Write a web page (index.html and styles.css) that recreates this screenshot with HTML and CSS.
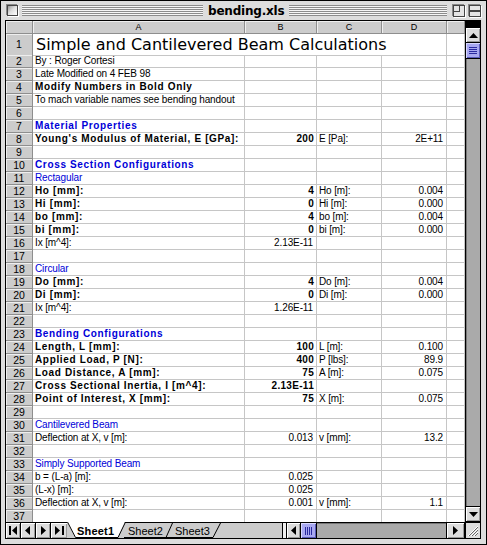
FILE: index.html
```html
<!DOCTYPE html>
<html>
<head>
<meta charset="utf-8">
<link rel="stylesheet" href="styles.css">
</head>
<body>
<div class="win">
  <div class="titlebar">
    <div class="closebox"></div>
    <div class="stripes left"></div>
    <div class="wtitle">bending.xls</div>
    <div class="stripes"></div>
    <div class="zoombox"><div class="zin"></div></div>
    <div class="shadebox"><div class="sline"></div></div>
  </div>
  <div class="body">
    <div class="main">
      <div class="sheet">
        <div class="row hdr"><div class="corner"></div><div class="ch">A</div><div class="ch">B</div><div class="ch">C</div><div class="ch">D</div><div class="ch"></div></div>
        <div class="row r1"><div class="rh">1</div><div class="c big span4">Simple and Cantilevered Beam Calculations</div><div class="c"></div></div>
        <div class="row"><div class="rh">2</div><div class="c">By : Roger Cortesi</div><div class="c"></div><div class="c"></div><div class="c"></div><div class="c"></div></div>
        <div class="row"><div class="rh">3</div><div class="c">Late Modified on 4 FEB 98</div><div class="c"></div><div class="c"></div><div class="c"></div><div class="c"></div></div>
        <div class="row"><div class="rh">4</div><div class="c b">Modify Numbers in Bold Only</div><div class="c"></div><div class="c"></div><div class="c"></div><div class="c"></div></div>
        <div class="row"><div class="rh">5</div><div class="c">To mach variable names see bending handout</div><div class="c"></div><div class="c"></div><div class="c"></div><div class="c"></div></div>
        <div class="row"><div class="rh">6</div><div class="c"></div><div class="c"></div><div class="c"></div><div class="c"></div><div class="c"></div></div>
        <div class="row"><div class="rh">7</div><div class="c b blue">Material Properties</div><div class="c"></div><div class="c"></div><div class="c"></div><div class="c"></div></div>
        <div class="row"><div class="rh">8</div><div class="c b">Young's Modulus of Material, E [GPa]:</div><div class="c b n">200</div><div class="c">E [Pa]:</div><div class="c n">2E+11</div><div class="c"></div></div>
        <div class="row"><div class="rh">9</div><div class="c"></div><div class="c"></div><div class="c"></div><div class="c"></div><div class="c"></div></div>
        <div class="row"><div class="rh">10</div><div class="c b blue">Cross Section Configurations</div><div class="c"></div><div class="c"></div><div class="c"></div><div class="c"></div></div>
        <div class="row"><div class="rh">11</div><div class="c blue">Rectagular</div><div class="c"></div><div class="c"></div><div class="c"></div><div class="c"></div></div>
        <div class="row"><div class="rh">12</div><div class="c b">Ho [mm]:</div><div class="c b n">4</div><div class="c">Ho [m]:</div><div class="c n">0.004</div><div class="c"></div></div>
        <div class="row"><div class="rh">13</div><div class="c b">Hi [mm]:</div><div class="c b n">0</div><div class="c">Hi [m]:</div><div class="c n">0.000</div><div class="c"></div></div>
        <div class="row"><div class="rh">14</div><div class="c b">bo [mm]:</div><div class="c b n">4</div><div class="c">bo [m]:</div><div class="c n">0.004</div><div class="c"></div></div>
        <div class="row"><div class="rh">15</div><div class="c b">bi [mm]:</div><div class="c b n">0</div><div class="c">bi [m]:</div><div class="c n">0.000</div><div class="c"></div></div>
        <div class="row"><div class="rh">16</div><div class="c">Ix [m^4]:</div><div class="c n">2.13E-11</div><div class="c"></div><div class="c"></div><div class="c"></div></div>
        <div class="row"><div class="rh">17</div><div class="c"></div><div class="c"></div><div class="c"></div><div class="c"></div><div class="c"></div></div>
        <div class="row"><div class="rh">18</div><div class="c blue">Circular</div><div class="c"></div><div class="c"></div><div class="c"></div><div class="c"></div></div>
        <div class="row"><div class="rh">19</div><div class="c b">Do [mm]:</div><div class="c b n">4</div><div class="c">Do [m]:</div><div class="c n">0.004</div><div class="c"></div></div>
        <div class="row"><div class="rh">20</div><div class="c b">Di [mm]:</div><div class="c b n">0</div><div class="c">Di [m]:</div><div class="c n">0.000</div><div class="c"></div></div>
        <div class="row"><div class="rh">21</div><div class="c">Ix [m^4]:</div><div class="c n">1.26E-11</div><div class="c"></div><div class="c"></div><div class="c"></div></div>
        <div class="row"><div class="rh">22</div><div class="c"></div><div class="c"></div><div class="c"></div><div class="c"></div><div class="c"></div></div>
        <div class="row"><div class="rh">23</div><div class="c b blue">Bending Configurations</div><div class="c"></div><div class="c"></div><div class="c"></div><div class="c"></div></div>
        <div class="row"><div class="rh">24</div><div class="c b">Length, L [mm]:</div><div class="c b n">100</div><div class="c">L [m]:</div><div class="c n">0.100</div><div class="c"></div></div>
        <div class="row"><div class="rh">25</div><div class="c b">Applied Load, P [N]:</div><div class="c b n">400</div><div class="c">P [lbs]:</div><div class="c n">89.9</div><div class="c"></div></div>
        <div class="row"><div class="rh">26</div><div class="c b">Load Distance, A [mm]:</div><div class="c b n">75</div><div class="c">A [m]:</div><div class="c n">0.075</div><div class="c"></div></div>
        <div class="row"><div class="rh">27</div><div class="c b">Cross Sectional Inertia, I [m^4]:</div><div class="c b n">2.13E-11</div><div class="c"></div><div class="c"></div><div class="c"></div></div>
        <div class="row"><div class="rh">28</div><div class="c b">Point of Interest, X [mm]:</div><div class="c b n">75</div><div class="c">X [m]:</div><div class="c n">0.075</div><div class="c"></div></div>
        <div class="row"><div class="rh">29</div><div class="c"></div><div class="c"></div><div class="c"></div><div class="c"></div><div class="c"></div></div>
        <div class="row"><div class="rh">30</div><div class="c blue">Cantilevered Beam</div><div class="c"></div><div class="c"></div><div class="c"></div><div class="c"></div></div>
        <div class="row"><div class="rh">31</div><div class="c">Deflection at X, v [m]:</div><div class="c n">0.013</div><div class="c">v [mm]:</div><div class="c n">13.2</div><div class="c"></div></div>
        <div class="row"><div class="rh">32</div><div class="c"></div><div class="c"></div><div class="c"></div><div class="c"></div><div class="c"></div></div>
        <div class="row"><div class="rh">33</div><div class="c blue">Simply Supported Beam</div><div class="c"></div><div class="c"></div><div class="c"></div><div class="c"></div></div>
        <div class="row"><div class="rh">34</div><div class="c">b = (L-a) [m]:</div><div class="c n">0.025</div><div class="c"></div><div class="c"></div><div class="c"></div></div>
        <div class="row"><div class="rh">35</div><div class="c">(L-x) [m]:</div><div class="c n">0.025</div><div class="c"></div><div class="c"></div><div class="c"></div></div>
        <div class="row"><div class="rh">36</div><div class="c">Deflection at X, v [m]:</div><div class="c n">0.001</div><div class="c">v [mm]:</div><div class="c n">1.1</div><div class="c"></div></div>
        <div class="row"><div class="rh">37</div><div class="c"></div><div class="c"></div><div class="c"></div><div class="c"></div><div class="c"></div></div>
      </div>
      <div class="vscroll">
        <div class="vsplit"></div>
        <div class="arrowbtn"><svg width="9" height="5" viewBox="0 0 9 5"><polygon points="4.5,0 9,5 0,5" fill="#000"/></svg></div>
        <div class="vthumb"><div class="grip-h"></div></div>
        <div class="vtrack"></div>
        <div class="arrowbtn"><svg width="9" height="5" viewBox="0 0 9 5"><polygon points="0,0 9,0 4.5,5" fill="#000"/></svg></div>
      </div>
    </div>
    <div class="bottom">
      <div class="navs">
        <div class="nav"><svg width="9" height="9" viewBox="0 0 9 9"><rect x="0" y="0" width="2" height="9" fill="#000"/><polygon points="8,0 8,9 3,4.5" fill="#000"/></svg></div>
        <div class="nav"><svg width="6" height="9" viewBox="0 0 6 9"><polygon points="5,0 5,9 0,4.5" fill="#000"/></svg></div>
        <div class="nav"><svg width="6" height="9" viewBox="0 0 6 9"><polygon points="1,0 1,9 6,4.5" fill="#000"/></svg></div>
        <div class="nav"><svg width="9" height="9" viewBox="0 0 9 9"><polygon points="0,0 0,9 5,4.5" fill="#000"/><rect x="7" y="0" width="2" height="9" fill="#000"/></svg></div>
      </div>
      <svg class="tabs" width="156" height="15" viewBox="0 0 156 15">
        <polygon points="0,-1 8,14.5 51,14.5 58,-1" fill="#fff"/>
        <polyline points="0.5,-1 8.5,14.5 51,14.5 58.5,-1" fill="none" stroke="#000"/>
        <polyline points="57,14.5 99,14.5 105.5,0" fill="none" stroke="#000"/>
        <polyline points="99,14.5 146,14.5 153.5,0" fill="none" stroke="#000"/>
        <text x="10" y="11.5" class="tsel">Sheet1</text>
        <text x="61" y="11.5" class="tlab">Sheet2</text>
        <text x="108" y="11.5" class="tlab">Sheet3</text>
      </svg>
      <div class="tabfill"></div>
      <div class="hsplit"></div>
      <div class="hbtn"><svg width="5" height="9" viewBox="0 0 5 9"><polygon points="5,0 5,9 0,4.5" fill="#000"/></svg></div>
      <div class="hthumb"><div class="grip-v"></div></div>
      <div class="htrack"></div>
      <div class="hbtn rbtn"><svg width="5" height="9" viewBox="0 0 5 9"><polygon points="0,0 0,9 5,4.5" fill="#000"/></svg></div>
      <div class="sizebox"><svg width="12" height="12" viewBox="0 0 12 12"><g stroke="#fff" stroke-width="1"><line x1="1" y1="11" x2="11" y2="1"/><line x1="4" y1="11" x2="11" y2="4"/><line x1="7" y1="11" x2="11" y2="7"/></g><g stroke="#666" stroke-width="1"><line x1="2" y1="11" x2="11" y2="2"/><line x1="5" y1="11" x2="11" y2="5"/><line x1="8" y1="11" x2="11" y2="8"/></g></svg></div>
    </div>
  </div>
</div>
</body>
</html>
```
FILE: styles.css
```css
* { box-sizing: border-box; }
html, body { margin: 0; padding: 0; background: #fff; }
body { font-family: "Liberation Sans", Arial, sans-serif; }

.win {
  width: 487px;
  height: 545px;
  border: 1px solid #000;
  background: #dddddd;
  padding: 0 5px 5px 4px;
  display: flex;
  flex-direction: column;
}

.titlebar {
  height: 19px;
  display: flex;
  align-items: center;
  margin-left: -4px;
  margin-right: -5px;
  padding-left: 6px;
  padding-right: 5px;
}
.closebox {
  width: 11px;
  height: 11px;
  border: 1px solid #444;
  background: linear-gradient(135deg, #999 0%, #ddd 45%, #fff 100%);
  box-shadow: 1px 1px 0 #fff, -1px -1px 0 #888;
  flex: none;
}
.stripes {
  flex: 1;
  height: 11px;
  margin: 0 4px;
  background: repeating-linear-gradient(to bottom, #8c8c8c 0, #8c8c8c 1px, #f6f6f6 1px, #f6f6f6 2px);
}
.stripes.left { flex: none; width: 181px; }
.wtitle {
  font-family: "DejaVu Sans", sans-serif;
  font-weight: bold;
  font-size: 12px;
  padding: 0 1px;
  letter-spacing: -0.2px;
}
.zoombox, .shadebox {
  width: 12px;
  height: 12px;
  border: 1px solid #444;
  background: #e4e4e4;
  box-shadow: 1px 1px 0 #fff, -1px -1px 0 #888;
  flex: none;
}
.zoombox { margin-left: 2px; margin-right: 4px; }
.zin {
  width: 6px;
  height: 6px;
  border-right: 1px solid #444;
  border-bottom: 1px solid #444;
}
.sline {
  margin-top: 4px;
  height: 2px;
  border-top: 1px solid #444;
  border-bottom: 1px solid #444;
}

.body {
  flex: 1;
  border: 1px solid #000;
  background: #fff;
  display: flex;
  flex-direction: column;
  overflow: hidden;
}
.main {
  height: 501px;
  flex: none;
  display: flex;
  overflow: hidden;
}
.sheet {
  width: 459px;
  flex: none;
  overflow: hidden;
}
.row {
  display: grid;
  grid-template-columns: 27px 212px 72px 65px 65px 18px;
  height: 13px;
}
.row.r1 { height: 21px; }
.row.r1 .span4 { grid-column: 2 / span 4; }

.c {
  border-right: 1px solid #c6c6c6;
  border-bottom: 1px solid #c6c6c6;
  font-size: 10px;
  line-height: 12px;
  padding: 0 2px;
  white-space: nowrap;
  letter-spacing: -0.12px;
  color: #000;
}
.c.n { text-align: right; padding-right: 3px; }
.c.b { font-weight: bold; letter-spacing: 0.65px; }
.c.n.b { letter-spacing: 0.3px; padding-right: 2px; }
.blue { color: #0000d8; }
.big {
  font-family: "DejaVu Sans", sans-serif;
  font-size: 16px;
  line-height: 21px;
  padding-left: 3px;
  letter-spacing: 0;
}

.corner, .ch, .rh {
  background: #cccccc;
  border-right: 1px solid #8e8e8e;
  border-bottom: 1px solid #8e8e8e;
  box-shadow: inset 1px 1px 0 #eeeeee;
  text-align: center;
  color: #000;
}
.ch {
  font-size: 9px;
  line-height: 12px;
}
.rh {
  font-size: 10.5px;
  line-height: 12px;
}
.r1 .rh { line-height: 21px; }

.vscroll {
  flex: 1;
  border-left: 1px solid #000;
  display: flex;
  flex-direction: column;
  background: #aaaaaa;
}
.vsplit {
  height: 6px;
  background: #000;
  flex: none;
}
.arrowbtn {
  height: 16px;
  flex: none;
  background: #dddddd;
  border-top: 1px solid #000;
  border-bottom: 1px solid #000;
  box-shadow: inset 1px 1px 0 #fff, inset -1px -1px 0 #999;
  display: flex;
  align-items: center;
  justify-content: center;
}
.vthumb {
  height: 16px;
  flex: none;
  background: #a8a8f0;
  border-bottom: 1px solid #000;
  box-shadow: inset 1px 1px 0 #d8d8ff, inset -1px -1px 0 #5858b8;
  display: flex;
  align-items: center;
  justify-content: center;
}
.grip-h {
  width: 8px;
  height: 7px;
  background: repeating-linear-gradient(to bottom, #2a2aa0 0, #2a2aa0 1px, transparent 1px, transparent 2px);
}
.vtrack {
  flex: 1;
  background: #aaaaaa;
  box-shadow: inset 1px 0 0 #777;
}

.bottom {
  flex: 1;
  border-top: 1px solid #000;
  display: flex;
  background: #cccccc;
}
.navs { display: flex; flex: none; }
.nav {
  width: 15px;
  border-right: 1px solid #000;
  background: #dddddd;
  box-shadow: inset 1px 1px 0 #fff, inset -1px -1px 0 #999;
  display: flex;
  align-items: center;
  justify-content: center;
}
.nav:last-child { width: 16px; border-right: none; }
.tabs { flex: none; display: block; overflow: visible; }
.tsel {
  font-family: "Liberation Sans", Arial, sans-serif;
  font-weight: bold;
  font-size: 11px;
  letter-spacing: 0.2px;
}
.tlab {
  font-family: "Liberation Sans", Arial, sans-serif;
  font-size: 11px;
}
.tabfill { width: 59px; flex: none; }
.hsplit {
  width: 5px;
  flex: none;
  border-left: 1px solid #000;
  border-right: 1px solid #000;
  background: #eeeeee;
}
.hbtn {
  width: 14px;
  flex: none;
  background: #dddddd;
  border-right: 1px solid #000;
  box-shadow: inset 1px 1px 0 #fff, inset -1px -1px 0 #999;
  display: flex;
  align-items: center;
  justify-content: center;
}
.hbtn.rbtn { width: 19px; border-left: 1px solid #000; }
.hthumb {
  width: 16px;
  flex: none;
  background: #a8a8f0;
  border-right: 1px solid #000;
  box-shadow: inset 1px 1px 0 #d8d8ff, inset -1px -1px 0 #5858b8;
  display: flex;
  align-items: center;
  justify-content: center;
}
.grip-v {
  width: 8px;
  height: 8px;
  background: repeating-linear-gradient(to right, #2a2aa0 0, #2a2aa0 1px, transparent 1px, transparent 2px);
}
.htrack {
  flex: 1;
  background: #aaaaaa;
  box-shadow: inset 0 1px 0 #777;
}
.sizebox {
  width: 15px;
  flex: none;
  border-left: 1px solid #000;
  background: #dddddd;
  display: flex;
  align-items: center;
  justify-content: center;
}
```
